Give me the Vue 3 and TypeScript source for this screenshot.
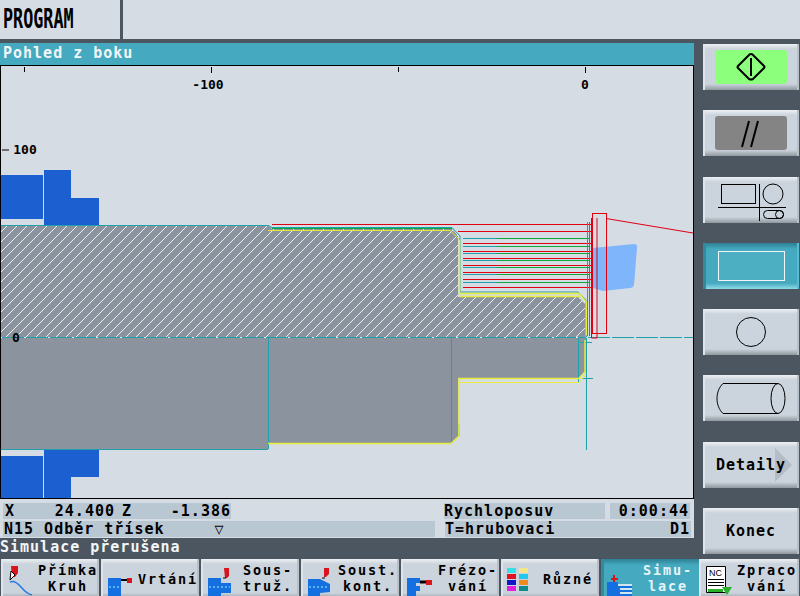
<template>
  <div class="screen">
    <header class="top-bar">
      <div class="mode"><span class="mode-text">PROGRAM</span></div>
      <div class="top-rest"></div>
    </header>

    <div class="body">
      <section class="work">
        <div class="title">Pohled z boku</div>

        <div class="canvas">
          <svg class="drawing" viewBox="0 65 694 434" width="694" height="434">
            <defs>
              <pattern id="hatch" width="10" height="10" patternUnits="userSpaceOnUse" patternTransform="translate(3 0)">
                <rect width="10" height="10" fill="#8b949e" />
                <path d="M-1 11 L11 -1" stroke="#eef1f4" stroke-width="1" />
              </pattern>
            </defs>

            <!-- scale ticks -->
            <g stroke="#000" stroke-width="1" fill="none">
              <path d="M24.5 67v5M211.5 67v6M398.5 67v5M585.5 67v6" />
              <path d="M2 150h7M2 243h4M2 430h4" />
            </g>

            <!-- chuck jaws -->
            <g fill="#1b5fd0">
              <rect x="1" y="175" width="42" height="44" />
              <path d="M44 170h27v28h28v27H44z" />
              <rect x="1" y="456" width="42" height="42" />
              <path d="M44 449h55v28H71v21H44z" />
            </g>

            <!-- workpiece -->
            <path d="M0 225H268L272 229H452L458 236V297H578L585 304V337H0z" fill="url(#hatch)" />
            <path d="M0 337H586V371L578 378H458V437L452 443H268V449H0z" fill="#8b949e" />

            <!-- tool -->
            <path d="M593 248L634 244Q638 244 637 248L634 285Q633 288 630 288L603 291L593 288z" fill="#7fb5fa" />

            <!-- passes -->
            <g fill="none" stroke-width="1">
              <path v-for="y in redPasses" :key="'r' + y" :d="`M463 ${y}.5H592`" stroke="#e00010" />
              <path v-for="y in greenPasses" :key="'g' + y" :d="`M497 ${y}.5H590`" stroke="#0ea838" />
              <path v-for="y in greenPasses" :key="'c' + y" :d="`M463 ${y}.5H497`" stroke="#1fa0aa" />
              <path d="M272 224.5H592M458 231.5H592" stroke="#e00010" />
              <path d="M0 225.5H268L272 227.5H452L460 236V292H578L586 300V337" stroke="#1fa0aa" />
              <path d="M268 230.5H450L459 239" stroke="#e2e83c" />
              <path d="M272 228.5H452" stroke="#0ea838" />
              <path d="M459.5 240V293.5H579L586.5 302V335" stroke="#e8ec3c" stroke-width="1.5" />
              <path d="M459 296.5H579" stroke="#e8ec3c" stroke-width="1.5" />
              <path d="M589.5 222V336" stroke="#0ea838" />
              <path d="M587.5 222V336" stroke="#1fa0aa" />
              <path d="M586.5 336V450" stroke="#1fa0aa" />
              <path d="M580 342.5H592M582 378.5H593" stroke="#1fa0aa" />

              <path d="M0 337.5H693" stroke="#1fa0aa" />
              <path d="M0 337.5H586" stroke="#eef1f4" stroke-dasharray="2 22" />
              <path d="M586 337.5H693" stroke="#d6dce4" stroke-dasharray="2 22" />

              <path d="M268.5 337V449M451.5 337V443M578.5 337V382" stroke="#1fa0aa" />
              <path d="M0 449.5H268" stroke="#1fa0aa" />
              <path d="M452 443L459 436V424" stroke="#0ea838" />
              <path d="M268 443.5H451L459 436V378.5H579L585 372V340" stroke="#e8ec3c" stroke-width="1.5" />
              <path d="M459 382.5H579L586 375" stroke="#e8ec3c" />

              <rect x="592.5" y="213.5" width="14" height="120" stroke="#e00010" />
              <path d="M591.5 218V338H597V218M606 218.5L693 233" stroke="#e00010" />
            </g>

            <!-- scale labels -->
            <g class="scale" text-anchor="middle">
              <text x="208" y="89">-100</text>
              <text x="585" y="89">0</text>
              <text x="25" y="154">100</text>
              <text x="16" y="342">0</text>
            </g>
          </svg>
        </div>

        <div class="status">
          <div class="status-row">
            <div class="cell pos">
              <span class="axis">X</span><span class="val v1">24.400</span>
              <span class="axis z">Z</span><span class="val v2">-1.386</span>
            </div>
            <div class="cell feed">Rychloposuv</div>
            <div class="cell time">0:00:44</div>
          </div>
          <div class="status-row">
            <div class="cell block">N15 Odběr třísek<span class="down">▽</span></div>
            <div class="cell tool">T=hrubovaci</div>
            <div class="cell edge">D1</div>
          </div>
        </div>

        <div class="message">Simulace přerušena</div>
      </section>

      <aside class="side">
        <button class="vkey">
          <span class="face green">
            <svg width="30" height="30" viewBox="0 0 30 30" fill="none" stroke="#000" stroke-width="2">
              <path d="M15 2Q16 2 17 3L28 14Q29 15 28 16L17 27Q15 28 13 27L2 16Q1 15 2 14L13 3Q14 2 15 2zM15 6V24" />
            </svg>
          </span>
        </button>
        <button class="vkey">
          <span class="face grey">
            <svg width="24" height="30" viewBox="0 0 24 30" fill="none" stroke="#000" stroke-width="2">
              <path d="M10 3L3 29M19 3L12 29" />
            </svg>
          </span>
        </button>
        <button class="vkey">
          <svg width="70" height="42" viewBox="0 0 70 42" fill="none" stroke="#000" stroke-width="1">
            <rect x="5.5" y="5.5" width="34" height="19" />
            <circle cx="57" cy="15" r="10" />
            <path d="M2 28.5H71M43.5 5V42" />
            <rect x="47.5" y="31.5" width="20" height="8" rx="4" />
            <circle cx="63.5" cy="35.5" r="4" />
          </svg>
        </button>
        <button class="vkey active">
          <span class="frame"></span>
        </button>
        <button class="vkey">
          <svg width="32" height="32" viewBox="0 0 32 32" fill="none" stroke="#000" stroke-width="1">
            <circle cx="16" cy="16" r="14.5" />
          </svg>
        </button>
        <button class="vkey">
          <svg width="70" height="34" viewBox="0 0 70 34" fill="none" stroke="#000" stroke-width="1">
            <path d="M62 2.5H7C-1 10 -1 25 7 32.5H62" />
            <ellipse cx="62" cy="17.5" rx="7" ry="15" />
          </svg>
        </button>
        <button class="vkey text-key">
          <span class="arrow"></span>
          <span class="key-label">Detaily</span>
        </button>
        <button class="vkey text-key">
          <span class="key-label">Konec</span>
        </button>
      </aside>
    </div>

    <nav class="softkeys">
      <button
        v-for="k in softkeys"
        :key="k.id"
        class="softkey"
        :class="{ on: k.id === 'simu', last: k.id === 'nc' }"
      >
        <svg class="soft-icon" width="34" height="38" viewBox="0 0 34 38">
          <g v-if="k.id === 'line'">
            <path d="M10 7h7v7l-3 4h-3z" fill="#d8141c" />
            <path d="M10 12l-1 9 5-5z" fill="#fff" stroke="#000" />
            <path d="M9 23Q14 21 20 28T31 36" fill="none" stroke="#2a7be0" stroke-width="1.5" />
          </g>
          <g v-if="k.id === 'drill'">
            <path d="M7 19h13v19H7z" fill="#1470e0" />
            <path d="M8 28h11" stroke="#aef" stroke-dasharray="2 2" />
            <path d="M20 21h6" stroke="#000" stroke-width="2" />
            <rect x="26" y="19" width="5" height="5" fill="#d8141c" />
          </g>
          <g v-if="k.id === 'turn'">
            <path d="M7 19h13v5h10v10H20v4H7z" fill="#1470e0" />
            <path d="M8 28h21" stroke="#aef" stroke-dasharray="2 2" />
            <path d="M23 9h5v8l-2 2h-2z" fill="#d8141c" />
            <path d="M22 19h3" stroke="#000" />
          </g>
          <g v-if="k.id === 'cont'">
            <path d="M7 20h12l10 5v8l-10 1v4H7z" fill="#1470e0" />
            <path d="M8 28h20" stroke="#aef" stroke-dasharray="2 2" />
            <path d="M23 9h5v6l-3 3h-2z" fill="#d8141c" />
            <path d="M21 19h3" stroke="#000" />
          </g>
          <g v-if="k.id === 'mill'">
            <path d="M6 19h13v5h-4v3h4v5h-4v6H6z" fill="#1470e0" />
            <path d="M19 23h6" stroke="#000" stroke-width="3" />
            <rect x="25" y="21" width="6" height="5" fill="#d8141c" />
          </g>
          <g v-if="k.id === 'misc'">
            <rect v-for="c in paletteCells" :key="c.x + '-' + c.y" :x="c.x" :y="c.y" width="9" height="5" :fill="c.fill" />
          </g>
          <g v-if="k.id === 'simu'">
            <path d="M6 23h10l2 3h13v11H6z" fill="#1470e0" />
            <path d="M17 26h14M19 30h12M19 34h12" stroke="#cfe6ee" stroke-width="2" />
            <path d="M13 16v7M10 20h7" stroke="#d8141c" stroke-width="2" />
          </g>
          <g v-if="k.id === 'nc'">
            <path d="M7.5 7.5h19v26h-19z" fill="#fff" stroke="#000" />
            <text class="nc" x="10" y="17">NC</text>
            <path d="M9 20.5h16M9 23.5h16M9 26.5h16" stroke="#000" />
            <path d="M9 30h15v3H9z" fill="#2ab02a" />
            <path d="M23 28h10l-5 8z" fill="#2ab02a" />
          </g>
        </svg>
        <span class="soft-label" :class="{ single: k.lines.length === 1 }">
          <span v-for="l in k.lines" :key="l" class="soft-line">{{ l }}</span>
        </span>
      </button>
    </nav>
  </div>
</template>

<script setup lang="ts">
interface Softkey {
  id: string
  lines: string[]
}

const softkeys: Softkey[] = [
  { id: 'line', lines: ['Přímka', 'Kruh'] },
  { id: 'drill', lines: ['Vrtání'] },
  { id: 'turn', lines: ['Sous-', 'truž.'] },
  { id: 'cont', lines: ['Soust.', 'kont.'] },
  { id: 'mill', lines: ['Frézo-', 'vání'] },
  { id: 'misc', lines: ['Různé'] },
  { id: 'simu', lines: ['Simu-', 'lace'] },
  { id: 'nc', lines: ['Zpraco', 'vání'] }
]

// rough pass positions read off the screen
const redPasses = [243, 251, 258, 265, 272, 279, 287]
const greenPasses = [238, 246, 253, 260, 267, 274, 282]

const paletteColors = [
  ['#33e0e8', '#f4e48a'],
  ['#e01420', '#22c8f0'],
  ['#1414c8', '#f08a1e'],
  ['#e020d8', '#128a8a']
]
const paletteCells = paletteColors.flatMap((row, r) =>
  row.map((fill, c) => ({ fill, x: 6 + c * 12, y: 9 + r * 6 }))
)
</script>

<style>
html, body { margin: 0; background: #4c5660; }
</style>

<style scoped>
.screen {
  width: 800px;
  height: 596px;
  overflow: hidden;
  display: flex;
  flex-direction: column;
  background: #4c5660;
  color: #000;
  font-family: "DejaVu Sans Mono", "Liberation Mono", monospace;
  font-size: 15px;
  font-weight: 700;
  letter-spacing: 1px;
}

.top-bar {
  height: 39px;
  flex: none;
  display: flex;
  border-bottom: 4px solid #4c5660;
  box-sizing: content-box;
}
.mode {
  width: 120px;
  background: #d6dce4;
  overflow: hidden;
  padding: 4px 0 0 3px;
  box-sizing: border-box;
}
.mode-text {
  display: block;
  font-size: 27px;
  line-height: 30px;
  letter-spacing: 0;
  transform: scaleX(0.62);
  transform-origin: left center;
}
.top-rest {
  flex: 1;
  margin-left: 3px;
  background: #d6dce4;
}

.body {
  flex: none;
  height: 515px;
  display: flex;
}

.work {
  width: 694px;
  display: flex;
  flex-direction: column;
  background: #d6dce4;
}
.title {
  height: 22px;
  flex: none;
  background: #45a9bf;
  color: #f2f6f8;
  padding-left: 3px;
  line-height: 21px;
}
.canvas {
  height: 434px;
  flex: none;
  box-sizing: border-box;
  border: 1px solid #000;
  background: #d6dce4;
  overflow: hidden;
}
.drawing {
  display: block;
  margin: -1px 0 0 -1px;
}
.scale text {
  font-family: "DejaVu Sans Mono", monospace;
  font-size: 13px;
  font-weight: 700;
  letter-spacing: 0;
  fill: #000;
}

.status {
  height: 39px;
  flex: none;
  padding-top: 4px;
  box-sizing: border-box;
  display: flex;
  flex-direction: column;
  gap: 2px;
}
.status-row {
  display: flex;
  height: 16px;
  padding-left: 3px;
}
.cell {
  background: #b9c7d3;
  line-height: 16px;
  white-space: nowrap;
  box-sizing: border-box;
}
.pos {
  width: 228px;
  display: flex;
  padding-left: 2px;
}
.axis { width: 10px; }
.val { text-align: right; }
.v1 { width: 100px; }
.z { margin-left: 7px; }
.v2 { width: 99px; }
.feed {
  width: 161px;
  margin-left: 213px;
}
.time {
  width: 80px;
  margin-left: 5px;
  text-align: right;
  padding-right: 1px;
}
.block {
  width: 432px;
  padding-left: 1px;
}
.down { margin-left: 50px; }
.tool {
  width: 220px;
  margin-left: 10px;
}
.edge {
  width: 26px;
  text-align: right;
  padding-right: 1px;
}

.message {
  height: 20px;
  flex: none;
  background: #4c5660;
  color: #f2f6f8;
  line-height: 18px;
}

.side {
  flex: 1;
  background: #4c5660;
  box-sizing: border-box;
  padding: 1px 1px 4px 9px;
  display: flex;
  flex-direction: column;
  justify-content: space-between;
}

.vkey,
.softkey {
  border: 0;
  margin: 0;
  padding: 0;
  font: inherit;
  letter-spacing: inherit;
  color: #000;
  background:
    linear-gradient(180deg, #eef1f4 0, #cbd3dc 5px, #cbd3dc calc(100% - 6px), #8f979f 100%);
  box-shadow: inset 2px 0 0 #dfe4ea, inset -2px 0 0 #b8c0c9;
}
.vkey {
  height: 46px;
  width: 96px;
  display: flex;
  align-items: center;
  justify-content: center;
  position: relative;
}
.vkey svg { display: block; }

.face {
  width: 72px;
  height: 34px;
  border-radius: 3px;
  display: flex;
  align-items: center;
  justify-content: center;
}
.green { background: #8cff7c; }
.grey { background: #848484; }

.active {
  background: linear-gradient(180deg, #2e7f92 0, #45a9bf 6px, #45a9bf calc(100% - 6px), #8fdce8 100%);
  box-shadow: inset 3px 0 0 #34899c, inset -2px 0 0 #5cbccf;
}
.frame {
  width: 65px;
  height: 28px;
  border: 1px solid #f2f6f8;
  background: #4dafc2;
}

.text-key .key-label { position: relative; }
.arrow {
  position: absolute;
  right: 7px;
  top: 6px;
  width: 0;
  height: 0;
  border-left: 17px solid #b4bcc5;
  border-top: 17px solid transparent;
  border-bottom: 17px solid transparent;
}

.softkeys {
  flex: none;
  height: 38px;
  display: flex;
  gap: 2px;
  padding-left: 1px;
  padding-top: 1px;
  box-sizing: border-box;
  background: #4c5660;
}
.softkey {
  width: 98px;
  height: 40px;
  display: flex;
  align-items: flex-start;
  text-align: center;
}
.softkey.last {
  width: 100px;
  margin-left: -2px;
}
.softkey.on {
  background: linear-gradient(180deg, #2e7f92 0, #45a9bf 6px, #45a9bf 100%);
  box-shadow: inset 3px 0 0 #34899c;
  color: #e6f4f8;
}
.soft-icon {
  flex: none;
  display: block;
}
.soft-label {
  flex: 1;
  display: flex;
  flex-direction: column;
  padding: 3px 0 0 2px;
  font-size: 13.5px;
  letter-spacing: 1.9px;
  line-height: 16px;
}
.soft-label.single { padding-top: 12px; }
.soft-line { display: block; white-space: nowrap; }

.nc {
  font-family: "Liberation Sans", sans-serif;
  font-size: 9px;
  font-weight: 400;
  letter-spacing: 0;
  fill: #000;
}
</style>
